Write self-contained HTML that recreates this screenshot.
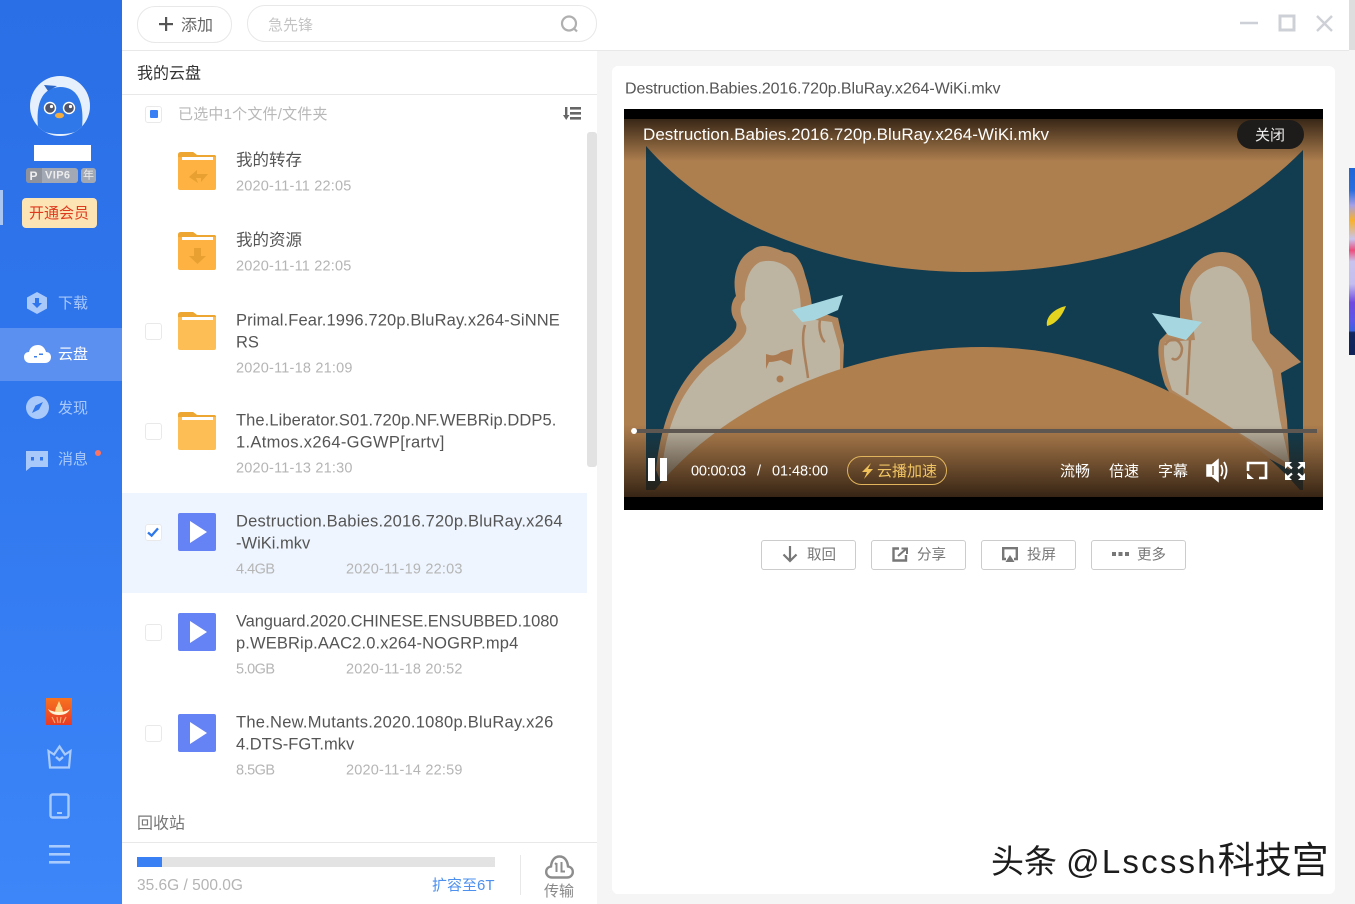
<!DOCTYPE html>
<html lang="zh"><head><meta charset="utf-8"><title>云盘</title>
<style>
html,body{margin:0;padding:0}
body{width:1355px;height:904px;position:relative;overflow:hidden;background:#f5f5f5;font-family:"Liberation Sans","Noto Sans CJK SC",sans-serif}
.a{position:absolute;white-space:nowrap}
.t{position:absolute;white-space:nowrap;transform:translateY(calc(-50% + 2.2px));line-height:1.2}
svg{position:absolute;display:block;overflow:visible}
.cb{position:absolute;left:145px;width:15px;height:15px;background:#fff;border:1px solid #e9e9e9;border-radius:3px}
.n{font-size:16.5px;color:#555;left:236px}
.d{font-size:14.5px;color:#b5b5b5;letter-spacing:.2px}
.s{letter-spacing:-.5px}
.nav{font-size:15px;left:58px;color:#a9c9fb}
.btn{position:absolute;top:540px;width:93px;height:28px;border:1px solid #ccc;border-radius:3px;background:#fff}
.bt{font-size:14.5px;color:#777;top:554px}
.ct{font-size:14.5px;color:#fff;top:470px}
</style></head><body>

<!-- right strip -->
<div class="a" style="left:1349px;top:0;width:6px;height:50px;background:#dedede"></div>
<div class="a" style="left:1349px;top:168px;width:6px;height:187px;background:linear-gradient(180deg,#1f66d8 0,#2a6ee0 12%,#a6a0e6 20%,#f9b12c 28%,#c8c4ee 38%,#ee4d7c 44%,#c9c3ee 50%,#c4bef0 62%,#7048e0 72%,#5a58ea 82%,#3a62e0 87%,#12275e 88%,#10245a 100%)"></div>

<!-- top bar -->
<div class="a" style="left:122px;top:0;width:1227px;height:50px;background:#fff;border-bottom:1px solid #e8e8e8"></div>

<!-- sidebar -->
<div class="a" style="left:0;top:0;width:122px;height:904px;background:linear-gradient(180deg,#2b6fe6 0,#2f75ec 40%,#3c86f9 100%)"></div>
<div class="a" style="left:0;top:190px;width:3px;height:35px;background:#a9c6f2"></div>
<div class="a" style="left:0;top:328px;width:122px;height:53px;background:#5b90f1"></div>

<svg style="left:30px;top:76px" width="60" height="60" viewBox="0 0 60 60">
<defs><clipPath id="av"><circle cx="30" cy="30" r="30"/></clipPath></defs>
<circle cx="30" cy="30" r="30" fill="#e6f0fd"/>
<g clip-path="url(#av)">
<path d="M8 52C6 30 10 12 30 11C50 11 54 30 52 52C46 60 14 60 8 52Z" fill="#2f78ea"/>
<path d="M14 9L27 10L18 15Z" fill="#2a66c8"/>
</g>
<circle cx="20" cy="32" r="6.2" fill="#fff"/><circle cx="20" cy="32" r="4.8" fill="#50556a"/><circle cx="21.500" cy="30.500" r="1.600" fill="#fff"/>
<circle cx="39" cy="32" r="6.2" fill="#fff"/><circle cx="39" cy="32" r="4.8" fill="#50556a"/><circle cx="40.500" cy="30.500" r="1.600" fill="#fff"/>
<ellipse cx="29.500" cy="39.500" rx="4.500" ry="2.800" fill="#f6ad3f"/>
</svg>
<div class="a" style="left:34px;top:145px;width:57px;height:16px;background:#fff"></div>
<div class="a" style="left:26px;top:168px;width:52px;height:15px;background:#a3a9b4;border-radius:3px"></div>
<div class="a" style="left:26px;top:168px;width:16px;height:15px;background:#8d929c;border-radius:3px 0 0 3px"></div>
<div class="t" style="left:29.500px;top:173.500px;font-size:12px;font-weight:700;color:#eee">P</div>
<div class="t" style="left:45px;top:173.500px;font-size:11px;font-weight:700;letter-spacing:.4px;color:#ececec">VIP6</div>
<div class="a" style="left:81px;top:168px;width:15px;height:15px;background:#a3a9b4;border-radius:3px"></div>
<div class="t" style="left:83px;top:173.500px;font-size:11px;color:#eee">年</div>
<div class="a" style="left:22px;top:198px;width:75px;height:30px;background:#fde4b5;border-radius:4px"></div>
<div class="t" style="left:29px;top:212px;font-size:15px;color:#dd3a1e">开通会员</div>

<svg style="left:26px;top:291px" width="22" height="24" viewBox="0 0 22 24"><path d="M11 1L21 6.500V17.500L11 23L1 17.500V6.500Z" fill="#a9c9fb"/><path d="M9 7H13V12H16L11 17L6 12H9Z" fill="#2f75ec"/></svg>
<div class="t nav" style="top:301.500px">下载</div>
<svg style="left:24px;top:344px" width="27" height="20" viewBox="0 0 27 20"><path d="M6 19C2 19 0 16 0 13C0 10 2 8 5 8C6 3 10 1 14 1C18 1 21 4 22 8C25 8 27 10 27 13C27 16 25 19 21 19Z" fill="#fff"/><path d="M10 12H13V13.500H10ZM15 9.500H19V11H15Z" fill="#3f7fe8"/></svg>
<div class="t nav" style="top:353px;color:#fff">云盘</div>
<svg style="left:26px;top:396px" width="23" height="23" viewBox="0 0 23 23"><circle cx="11.500" cy="11.500" r="11.500" fill="#a9c9fb"/><path d="M17 6L13 13.500L6 17L9.500 9.500Z" fill="#2f75ec"/></svg>
<div class="t nav" style="top:407px">发现</div>
<svg style="left:26px;top:450px" width="22" height="21" viewBox="0 0 22 21"><path d="M0 1H22V17H5L0 21Z" fill="#a9c9fb"/><rect x="5" y="7" width="3" height="3.500" fill="#2f75ec"/><rect x="14" y="7" width="3" height="3.500" fill="#2f75ec"/></svg>
<div class="t nav" style="top:458px">消息</div>
<div class="a" style="left:95px;top:450px;width:6px;height:6px;border-radius:50%;background:#ff7360"></div>

<svg style="left:46px;top:698px" width="26" height="27" viewBox="0 0 26 27"><defs><linearGradient id="rg" x1="0" y1="0" x2="0" y2="1"><stop offset="0" stop-color="#f7741f"/><stop offset="1" stop-color="#e83a26"/></linearGradient></defs><rect width="26" height="27" fill="url(#rg)"/><path d="M13 3L16 10H10Z" fill="#fbd78c"/><path d="M2 11C8 15 18 15 24 11C22 15 19 17 13 17C7 17 4 15 2 11Z" fill="#fff3d8"/><path d="M10 9H16L17 14H9Z" fill="#fbd78c"/><path d="M6 19L9 25M11 19L12 25M15 19L14 25M20 19L17 25" stroke="#f8a66e" stroke-width="1.200" fill="none"/></svg>
<svg style="left:47px;top:745px" width="25" height="24" viewBox="0 0 25 24" fill="none" stroke="#a9cbfd" stroke-width="2.200"><path d="M1.500 6L7 9.500L12.500 1.500L18 9.500L23.500 6L22 22.500H3Z"/><path d="M9 12L12.500 15L16 12" stroke-width="2.400"/></svg>
<svg style="left:49px;top:793px" width="21" height="26" viewBox="0 0 21 26" fill="none" stroke="#a9cbfd" stroke-width="2.400"><rect x="1.500" y="1.500" width="18" height="23" rx="2"/><rect x="8" y="19" width="5" height="2" fill="#a9cbfd" stroke="none"/></svg>
<svg style="left:49px;top:845px" width="21" height="19" viewBox="0 0 21 19" fill="#a9cbfd"><rect width="21" height="2.600"/><rect y="8" width="21" height="2.600"/><rect y="16" width="21" height="2.600"/></svg>

<!-- file column -->
<div class="a" style="left:122px;top:51px;width:475px;height:853px;background:#fff"></div>

<div class="a" style="left:137px;top:6px;width:93px;height:35px;border:1px solid #e8e8e8;border-radius:18px;background:#fff"></div>
<svg style="left:159px;top:17px" width="14" height="14" viewBox="0 0 14 14" fill="#555"><rect x="6" width="2.200" height="14"/><rect y="6" width="14" height="2.200"/></svg>
<div class="t" style="left:181px;top:24px;font-size:16px;color:#666">添加</div>
<div class="a" style="left:247px;top:5px;width:348px;height:35px;border:1px solid #e8e8e8;border-radius:18px;background:#fff"></div>
<div class="t" style="left:268px;top:24px;font-size:15px;color:#c4c4c4">急先锋</div>
<svg style="left:560px;top:15px" width="19" height="19" viewBox="0 0 19 19" fill="none" stroke="#b0b0b0" stroke-width="2.200"><circle cx="9" cy="8.500" r="7"/><path d="M14 13.500L17 16.500"/></svg>

<svg style="left:1240px;top:14px" width="94" height="18" viewBox="0 0 94 18" fill="none" stroke="#cdd0d6" stroke-width="2.400"><path d="M0 9H18"/><rect x="40" y="2" width="14" height="14" stroke-width="3"/><path d="M77 2L92 17M92 2L77 17"/></svg>

<div class="t" style="left:137px;top:72px;font-size:16px;color:#333">我的云盘</div>
<div class="a" style="left:122px;top:94px;width:475px;height:1px;background:#e8e8e8"></div>

<div class="cb" style="top:106px"></div>
<div class="a" style="left:150px;top:110px;width:8px;height:8px;background:#3a80f5;border-radius:1px"></div>
<div class="t" style="left:178px;top:113px;font-size:15px;letter-spacing:.2px;color:#b8b8b8">已选中1个文件/文件夹</div>
<svg style="left:563px;top:106px" width="18" height="15" viewBox="0 0 18 15" fill="#666"><rect x="7" y="1" width="11" height="2.600"/><rect x="7" y="6" width="11" height="2.600"/><rect x="7" y="11" width="11" height="2.600"/><rect x="2" y="1" width="2.400" height="10"/><path d="M0 9H6.400L3.200 14Z"/></svg>

<div class="a" style="left:587px;top:132px;width:10px;height:335px;background:#e2e2e2;border-radius:3px"></div>

<!-- rows -->
<svg style="left:178px;top:152px" width="38" height="38" viewBox="0 0 38 38"><path d="M0 3Q0 0 3 0H15L19 3H36Q38 3 38 5V36Q38 38 36 38H2Q0 38 0 36Z" fill="#fdb241"/><path d="M0 3Q0 0 3 0H15L19 3H36Q38 3 38 5V5H0Z" fill="#eea632"/><rect x="4" y="5" width="31" height="3" fill="#fff"/><path d="M11 25L19 18V22H30L23 30V26H18L20 31Z" fill="#e8a030"/></svg>
<div class="t n" style="top:159px">我的转存</div>
<div class="t d" style="left:236px;top:184.500px">2020-11-11 22:05</div>

<svg style="left:178px;top:232px" width="38" height="38" viewBox="0 0 38 38"><path d="M0 3Q0 0 3 0H15L19 3H36Q38 3 38 5V36Q38 38 36 38H2Q0 38 0 36Z" fill="#fdb241"/><path d="M0 3Q0 0 3 0H15L19 3H36Q38 3 38 5V5H0Z" fill="#eea632"/><rect x="4" y="5" width="31" height="3" fill="#fff"/><path d="M16 16H23V24H28L19.500 32L11 24H16Z" fill="#e8a030"/></svg>
<div class="t n" style="top:239px">我的资源</div>
<div class="t d" style="left:236px;top:264.500px">2020-11-11 22:05</div>

<div class="cb" style="top:323px"></div>
<svg style="left:178px;top:312px" width="38" height="38" viewBox="0 0 38 38"><path d="M0 3Q0 0 3 0H15L19 3H36Q38 3 38 5V36Q38 38 36 38H2Q0 38 0 36Z" fill="#fdbf55"/><path d="M0 3Q0 0 3 0H15L19 3H36Q38 3 38 5V5H0Z" fill="#eea632"/><rect x="4" y="5" width="31" height="3" fill="#fff"/></svg>
<div class="t n" style="top:319px;letter-spacing:.13px">Primal.Fear.1996.720p.BluRay.x264-SiNNE</div>
<div class="t n" style="top:341px">RS</div>
<div class="t d" style="left:236px;top:366.500px">2020-11-18 21:09</div>

<div class="cb" style="top:423px"></div>
<svg style="left:178px;top:412px" width="38" height="38" viewBox="0 0 38 38"><path d="M0 3Q0 0 3 0H15L19 3H36Q38 3 38 5V36Q38 38 36 38H2Q0 38 0 36Z" fill="#fdbf55"/><path d="M0 3Q0 0 3 0H15L19 3H36Q38 3 38 5V5H0Z" fill="#eea632"/><rect x="4" y="5" width="31" height="3" fill="#fff"/></svg>
<div class="t n" style="top:419px;letter-spacing:.08px">The.Liberator.S01.720p.NF.WEBRip.DDP5.</div>
<div class="t n" style="top:441px;letter-spacing:.33px">1.Atmos.x264-GGWP[rartv]</div>
<div class="t d" style="left:236px;top:466.500px">2020-11-13 21:30</div>

<div class="a" style="left:122px;top:493px;width:465px;height:100px;background:#eef5fe"></div>
<div class="cb" style="top:524px"></div>
<svg style="left:147px;top:527px" width="12" height="10" viewBox="0 0 13 11" fill="none" stroke="#2f78ea" stroke-width="2.600"><path d="M1 6L5 9.500L12 1.500"/></svg>
<svg style="left:178px;top:513px" width="38" height="38" viewBox="0 0 38 38"><rect width="38" height="38" rx="2" fill="#6683f5"/><path d="M12 8L29 19L12 30Z" fill="#fff"/></svg>
<div class="t n" style="top:520px;letter-spacing:.22px">Destruction.Babies.2016.720p.BluRay.x264</div>
<div class="t n" style="top:542px">-WiKi.mkv</div>
<div class="t d s" style="left:236px;top:567.500px">4.4GB</div>
<div class="t d" style="left:346px;top:567.500px">2020-11-19 22:03</div>

<div class="cb" style="top:624px"></div>
<svg style="left:178px;top:613px" width="38" height="38" viewBox="0 0 38 38"><rect width="38" height="38" rx="2" fill="#6683f5"/><path d="M12 8L29 19L12 30Z" fill="#fff"/></svg>
<div class="t n" style="top:620px;letter-spacing:-.11px">Vanguard.2020.CHINESE.ENSUBBED.1080</div>
<div class="t n" style="top:642px;letter-spacing:.13px">p.WEBRip.AAC2.0.x264-NOGRP.mp4</div>
<div class="t d s" style="left:236px;top:667.500px">5.0GB</div>
<div class="t d" style="left:346px;top:667.500px">2020-11-18 20:52</div>

<div class="cb" style="top:725px"></div>
<svg style="left:178px;top:714px" width="38" height="38" viewBox="0 0 38 38"><rect width="38" height="38" rx="2" fill="#6683f5"/><path d="M12 8L29 19L12 30Z" fill="#fff"/></svg>
<div class="t n" style="top:721px;letter-spacing:.26px">The.New.Mutants.2020.1080p.BluRay.x26</div>
<div class="t n" style="top:743px">4.DTS-FGT.mkv</div>
<div class="t d s" style="left:236px;top:768.500px">8.5GB</div>
<div class="t d" style="left:346px;top:768.500px">2020-11-14 22:59</div>

<div class="t" style="left:137px;top:822px;font-size:16px;color:#777">回收站</div>
<div class="a" style="left:122px;top:842px;width:475px;height:1px;background:#e8e8e8"></div>
<div class="a" style="left:137px;top:857px;width:358px;height:10px;background:#e3e3e3"></div>
<div class="a" style="left:137px;top:857px;width:25px;height:10px;background:#3a80f5"></div>
<div class="t" style="left:137px;top:884px;font-size:15.500px;color:#b4b4b4">35.6G / 500.0G</div>
<div class="t" style="left:432px;top:884px;font-size:15px;color:#4e90ee">扩容至6T</div>
<div class="a" style="left:520px;top:855px;width:1px;height:40px;background:#e8e8e8"></div>
<svg style="left:545px;top:855px" width="29" height="24" viewBox="0 0 29 24" fill="none" stroke="#8d8d8d" stroke-width="2.400"><path d="M7 22.500C3.500 22.500 1.200 20 1.200 17C1.200 14 3 12 6 11.500C6.500 5 10 1.500 14.500 1.500C19 1.500 22.500 5 23 11.500C26 12 27.800 14 27.800 17C27.800 20 25.500 22.500 22 22.500Z"/><path d="M11.500 8V17M10 9.500L11.500 8M16.500 7V16.500H20" stroke-width="2"/></svg>
<div class="t" style="left:544px;top:890px;font-size:15px;color:#888">传输</div>

<!-- preview card -->
<div class="a" style="left:612px;top:66px;width:723px;height:828px;background:#fff;border-radius:6px"></div>
<div class="t" style="left:625px;top:87px;font-size:16px;letter-spacing:-.1px;color:#555">Destruction.Babies.2016.720p.BluRay.x264-WiKi.mkv</div>

<!-- video -->
<svg style="left:624px;top:109px" width="699" height="401" viewBox="624 109 699 401">
<defs>
<linearGradient id="tg" x1="0" y1="0" x2="0" y2="1"><stop offset="0" stop-color="#2b1d10" stop-opacity=".9"/><stop offset="1" stop-color="#2b1d10" stop-opacity="0"/></linearGradient>
<linearGradient id="bg" x1="0" y1="0" x2="0" y2="1"><stop offset="0" stop-color="#2a1b0e" stop-opacity="0"/><stop offset="1" stop-color="#2a1b0e" stop-opacity=".9"/></linearGradient>
</defs>
<rect x="624" y="109" width="699" height="401" fill="#000"/>
<rect x="624" y="119" width="699" height="378" fill="#ad7e4e"/>
<!-- teal -->
<path d="M646 146C720 230 840 272 972 272C1100 272 1220 235 1303 150V490H646Z" fill="#123d50"/>
<!-- left figure -->
<path d="M656 470C660 430 672 390 700 362C716 346 740 335 736 322C728 312 732 300 736 296C732 280 736 258 752 250C760 243 772 246 784 252C796 252 802 262 805 275C810 290 812 302 812 310L838 318L844 345L842 400L660 480Z" fill="#b0875f"/>
<path d="M662 470C666 430 678 395 706 368C722 354 750 340 746 326C740 316 738 306 745 300C744 285 748 268 760 262C775 258 790 265 795 278C800 290 802 305 800 318L832 322L840 350L840 400L668 480Z" fill="#bdb4a2"/>
<path d="M766 354C772 356 776 356 781 352L793 349L791 365L781 360C777 361 773 362 769 362L766 369Z" fill="#ab7a50"/>
<circle cx="780" cy="379" r="3.500" fill="#ab7a50"/>
<path d="M805 325C800 340 806 360 808 378M820 320C818 330 822 340 825 342" stroke="#a9805c" stroke-width="2.500" fill="none"/>
<path d="M792 310L843 295L838 310L815 320L802 322Z" fill="#a6d7e0"/>
<!-- right figure -->
<path d="M1160 340C1156 350 1160 370 1165 385L1180 410L1290 470L1287 420L1281 373L1301 362L1270 333L1263 300C1260 275 1245 252 1222 252C1200 252 1182 272 1180 300L1180 320Z" fill="#b0875f"/>
<path d="M1165 342C1162 355 1166 372 1172 390L1290 465L1280 420L1272 370L1252 340L1250 305C1248 285 1238 267 1220 266C1200 268 1190 285 1190 300L1195 340Z" fill="#bdb4a2"/>
<path d="M1152 313L1202 322L1186 340L1168 335Z" fill="#a6d7e0"/>
<path d="M1165 345C1172 335 1180 340 1182 348C1182 358 1175 362 1172 358M1190 340L1187 395" stroke="#a9805c" stroke-width="2.500" fill="none"/>
<!-- table -->
<path d="M655 490C710 420 830 347 983 347C1120 347 1240 420 1300 490Z" fill="#b07f4e"/>
<!-- side brown cover -->
<path d="M624 119H646V497H624ZM1303 119H1323V497H1303Z" fill="#ad7e4e"/>
<!-- leaf -->
<path d="M1066 306C1056 308 1045 316 1047 326C1056 324 1062 316 1066 306Z" fill="#e5d41f"/>
<rect x="624" y="119" width="699" height="42" fill="url(#tg)"/>
<rect x="624" y="425" width="699" height="72" fill="url(#bg)"/>
<rect x="631" y="429" width="686" height="4" fill="#5d5651"/>
<circle cx="634" cy="431" r="3" fill="#fff"/>
<rect x="648" y="458" width="7" height="23" fill="#fff"/><rect x="660" y="458" width="7" height="23" fill="#fff"/>
<rect x="847.500" y="456.500" width="99" height="28" rx="14" fill="none" stroke="#e0b45c"/>
<path d="M871 463L862 472H867L864 479L873 469H868Z" fill="#f2c25a"/>
<path d="M1207 465H1212L1218 460V481L1212 476H1207Z" fill="#fff" stroke="#fff" stroke-width="1.500"/>
<path d="M1213 466V475" stroke="#7a6044" stroke-width="1.500"/>
<path d="M1221 465Q1224 470.500 1221 476M1224 462Q1229 470.500 1224 479" fill="none" stroke="#fff" stroke-width="1.800"/>
<path d="M1252 463H1266V478H1259M1252 463H1248V471" fill="none" stroke="#fff" stroke-width="2.600"/>
<path d="M1247 479V473L1254 479Z" fill="#fff"/>
<path d="M1285 462H1292L1285 469ZM1305 462H1298L1305 469ZM1285 480H1292L1285 473ZM1305 480H1298L1305 473Z" fill="#fff"/>
<path d="M1288 465L1292 468.500M1302 465L1298 468.500M1288 477L1292 473.500M1302 477L1298 473.500" stroke="#fff" stroke-width="2.200"/>
</svg>
<div class="t" style="left:643px;top:132.500px;font-size:17px;color:#fff;letter-spacing:.04px">Destruction.Babies.2016.720p.BluRay.x264-WiKi.mkv</div>
<div class="a" style="left:1237px;top:120px;width:67px;height:29px;background:#1e1c1a;border-radius:15px"></div>
<div class="t" style="left:1255px;top:133.500px;font-size:15px;color:#eee">关闭</div>
<div class="t ct" style="left:691px;letter-spacing:-.2px">00:00:03</div>
<div class="t ct" style="left:757px">/</div>
<div class="t ct" style="left:772px;letter-spacing:-.05px">01:48:00</div>
<div class="t" style="left:877px;top:470px;font-size:15px;color:#f0c463">云播加速</div>
<div class="t ct" style="left:1060px;font-size:15px">流畅</div>
<div class="t ct" style="left:1109px;font-size:15px">倍速</div>
<div class="t ct" style="left:1158px;font-size:15px">字幕</div>

<!-- action buttons -->
<div class="btn" style="left:761px"></div>
<div class="btn" style="left:871px"></div>
<div class="btn" style="left:981px"></div>
<div class="btn" style="left:1091px"></div>
<svg style="left:782px;top:546px" width="16" height="17" viewBox="0 0 16 17" fill="none" stroke="#777" stroke-width="2.200"><path d="M8 0V15M1.500 8.500L8 15L14.500 8.500"/></svg>
<div class="t bt" style="left:807px">取回</div>
<svg style="left:892px;top:547px" width="16" height="15" viewBox="0 0 16 15" fill="none" stroke="#777" stroke-width="2.400"><path d="M7 1.500H1.500V13.500H14V8"/><path d="M6 9L14 2M9.500 1.500H15V7" stroke-width="2"/></svg>
<div class="t bt" style="left:917px">分享</div>
<svg style="left:1002px;top:547px" width="16" height="15" viewBox="0 0 16 15"><path d="M4 12H1.200V1.200H14.800V12H12" fill="none" stroke="#777" stroke-width="2.400"/><path d="M8 8L12.500 15H3.500Z" fill="#777"/></svg>
<div class="t bt" style="left:1027px">投屏</div>
<svg style="left:1112px;top:552px" width="17" height="5" viewBox="0 0 17 5" fill="#777"><rect width="4" height="4"/><rect x="6.500" width="4" height="4"/><rect x="13" width="4" height="4"/></svg>
<div class="t bt" style="left:1137px">更多</div>

<!-- watermark -->
<div class="t" style="left:991px;top:859px;font-size:33px;color:#1c1c1c;text-shadow:1px -1px 0 #fff">头条 <span style="letter-spacing:2.200px">@Lscssh</span><span style="font-size:37px">科技宫</span></div>

</body></html>
